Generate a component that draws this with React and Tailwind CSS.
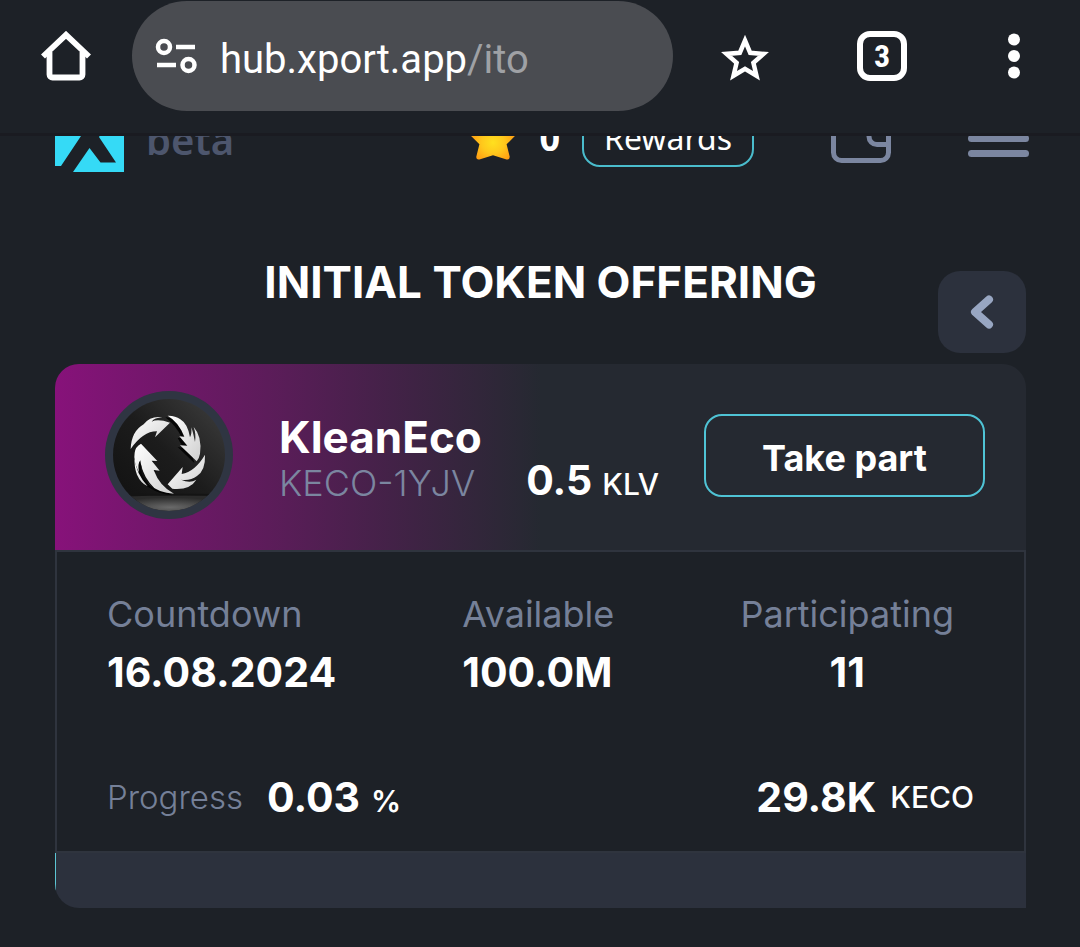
const STATS = [
  { label: 'Countdown', value: '16.08.2024' },
  { label: 'Available', value: '100.0M' },
  { label: 'Participating', value: '11', center: true },
]

const PROGRESS = 0.03

function BrowserBar() {
  return (
    <div className="flex h-[136px] items-start border-b-[3px] border-[#1a1b21] pl-[41px] pr-[59px]">
      <button aria-label="Home" className="mt-[31px] shrink-0">
        <svg className="h-[50px] w-[50px]" viewBox="0 0 50 50" fill="none" stroke="#fff">
          <path d="M8.500 21V43.500a3 3 0 0 0 3 3H38.500a3 3 0 0 0 3-3V21" strokeWidth="5.800" />
          <path d="M2 25.500 25 3.800l23 21.700" strokeWidth="5.800" strokeLinejoin="miter" />
        </svg>
      </button>

      <button className="ml-[41px] mt-px flex h-[110px] min-w-0 flex-1 items-center rounded-full bg-[#4a4c51] pl-[22px] text-left font-[Roboto,sans-serif] text-[40px] leading-[48px] text-white">
        <svg className="h-[44px] w-[44px] shrink-0" viewBox="0 0 44 44" fill="none" stroke="#fff" strokeWidth="4.500">
          <circle cx="10" cy="13" r="6" />
          <path d="M22 13h19M3 31h19" />
          <circle cx="34.500" cy="31" r="6" />
        </svg>
        <span className="ml-[22px] pt-[8px]">
          hub.xport.app<span className="text-[#9fa1a5]">/ito</span>
        </span>
      </button>

      <button aria-label="Bookmark" className="ml-[48px] mt-[34px] shrink-0">
        <svg className="h-[48px] w-[48px]" viewBox="0 0 48 48" fill="none" stroke="#fff" strokeWidth="4.500">
          <path d="M24 6.500 29.200 18.800 42.500 19.900 32.400 28.700 35.500 41.700 24 34.800 12.500 41.700 15.600 28.700 5.500 19.900 18.800 18.800Z" />
        </svg>
      </button>

      <button
        aria-label="Tabs"
        className="ml-[88px] mt-[31px] flex h-[50px] w-[50px] shrink-0 items-center justify-center rounded-[13px] border-[6px] border-white font-['Roboto_Condensed',Roboto,sans-serif] text-[32px] font-bold leading-[38px] text-white"
      >
        3
      </button>

      <button aria-label="Menu" className="ml-[100px] mt-[33px] shrink-0">
        <svg className="h-[46px] w-[14px]" viewBox="0 0 14 46" fill="#fff">
          <circle cx="7" cy="6.500" r="6" />
          <circle cx="7" cy="23" r="6" />
          <circle cx="7" cy="39.500" r="6" />
        </svg>
      </button>
    </div>
  )
}

// Scrolled halfway under the browser bar, so everything hangs from its bottom edge
function AppHeader() {
  return (
    <header className="flex h-[36px] items-end overflow-hidden pl-[55px] pr-[51px]">
      <svg className="h-[69px] w-[69px] shrink-0" viewBox="0 0 69 69" fill="#35daf6">
        <path d="M0 0H69V69H18L34.500 45 45.500 59.500H61L44 34 65 3H50L34.500 24 20 3H5L26 33 6 63H0Z" />
      </svg>
      <span className="ml-[22px] pb-[10px] font-['Noto_Sans',sans-serif] text-[40px] font-semibold leading-[44px] text-[#4d566d]">
        beta
      </span>

      <svg className="mb-[12px] ml-auto h-[46px] w-[46px] shrink-0" viewBox="0 0 44 44">
        <defs>
          <radialGradient id="gold" cx="0.5" cy="0.6" r="0.5">
            <stop offset="0" stopColor="#ffe01f" />
            <stop offset="0.5" stopColor="#ffc81c" />
            <stop offset="1" stopColor="#ff9d12" />
          </radialGradient>
        </defs>
        <path
          d="M20 5q2-4 4 0l5 12 13 1q3 .5 1 3L35 29 38 41q0 3-3 2.500L22 39.500 9 43.500q-3 .5-3-2.500L9 29 1 21q-2-2.500 1-3l13-1Z"
          fill="url(#gold)"
        />
      </svg>
      <span className="ml-[23px] pb-[14px] font-['Noto_Sans',sans-serif] text-[36px] font-bold leading-[40px] text-white">0</span>
      <button className="mb-[5px] ml-[22px] h-[58px] w-[172px] shrink-0 rounded-[18px] border-2 border-[#4abccc] font-['Noto_Sans',sans-serif] text-[32px] leading-[50px] text-white">
        Rewards
      </button>

      <button aria-label="Wallet" className="mb-[9px] ml-[77px] shrink-0">
        <svg className="h-[56px] w-[60px]" viewBox="0 0 60 56" fill="none" stroke="#7b86a0" strokeWidth="5">
          <rect x="2.500" y="2.500" width="55" height="51" rx="8" />
          <path d="M57 17H46a8 8 0 0 0-8 8v4.500a8 8 0 0 0 8 8H57" />
        </svg>
      </button>
      <button aria-label="Open navigation" className="mb-[15px] ml-[77px] flex shrink-0 flex-col gap-[8px]">
        <span className="h-[7px] w-[61px] rounded-full bg-[#7b86a0]" />
        <span className="h-[7px] w-[61px] rounded-full bg-[#7b86a0]" />
        <span className="h-[7px] w-[61px] rounded-full bg-[#7b86a0]" />
      </button>
    </header>
  )
}

function TokenLogo() {
  return (
    <svg className="h-[128px] w-[128px] shrink-0" viewBox="30 34 384 384" role="img" aria-label="KleanEco logo">
      <defs>
        <linearGradient id="disc" x1="0" y1="1" x2="1" y2="0">
          <stop offset="0" stopColor="#101010" />
          <stop offset="0.5" stopColor="#1c1c1c" />
          <stop offset="1" stopColor="#414141" />
        </linearGradient>
        <radialGradient id="floor" cx="0.5" cy="0.6" r="0.5">
          <stop offset="0" stopColor="#6a6a6a" />
          <stop offset="1" stopColor="#2b2b2b" />
        </radialGradient>
        <linearGradient id="silver" x1="0" y1="0" x2="1" y2="1">
          <stop offset="0" stopColor="#ffffff" />
          <stop offset="1" stopColor="#cfcfcf" />
        </linearGradient>
        <clipPath id="discClip">
          <circle cx="222" cy="226" r="168" />
        </clipPath>
      </defs>
      <circle cx="222" cy="226" r="192" fill="#2f3542" />
      <g clipPath="url(#discClip)">
        <rect x="50" y="50" width="350" height="350" fill="url(#disc)" />
        <rect x="50" y="347" width="350" height="60" fill="url(#floor)" />
        <path d="M50 342H400V349Q220 345 50 352Z" fill="#141414" />
        <g fill="#050505" transform="translate(-7 5)">
          <path d="M218 108Q262 112 280 158L305 245 255 197 272 200 255 170 268 170Q248 130 218 108Z" />
          <path d="M138 192 185 243 172 243 192 272 178 270Q195 320 238 342Q160 332 132 278Q112 240 138 192Z" />
        </g>
        <g fill="url(#silver)">
          <path d="M107 208Q109 155 146 134Q166 108 202 113Q178 114 170 126Q188 116 225 129L180 173 186 155Q145 154 107 208Z" />
          <path d="M218 108Q240 107 256 119Q278 132 285 173Q291 163 289 143Q294 157 300 187Q304 164 296 142Q322 171 315 222Q313 235 305 245L255 197 277 198 253 170 268 171Q251 127 218 108Z" />
          <path d="M330 225Q332 271 306 289Q286 304 258 300Q285 312 304 300Q285 332 232 327L218 314 263 262 260 283Q300 276 330 225Z" />
          <path d="M138 192 187 244 170 243 194 273 176 271Q194 320 237 342Q190 340 162 313Q140 285 136 242Q127 252 132 278Q114 244 119 219Q121 201 138 192Z" />
          <path d="M119 238Q124 283 158 320Q137 310 126 285Q117 263 119 238Z" />
        </g>
        <path d="M137 250Q145 294 181 329Q151 309 140 283Z" fill="#111" />
      </g>
    </svg>
  )
}

function OfferingCard() {
  return (
    <article>
      <div className="flex h-[186px] items-center rounded-t-[24px] bg-linear-to-r/srgb from-[#87127a] to-[#252931] to-50% pb-[4px] pl-[50px] pr-[41px]">
        <TokenLogo />
        <div className="ml-[46px] pt-[4px]">
          <h2 className="text-[44px] font-bold leading-[52px] text-white">KleanEco</h2>
          <p className="text-[36px] font-light leading-[40px] text-[#7b86a0]">KECO-1YJV</p>
        </div>
        <p className="ml-auto flex items-baseline gap-[10px] pt-[50px] text-white">
          <span className="text-[41px] font-bold leading-[48px]">0.5</span>
          <span className="text-[30px] font-medium leading-[40px]">KLV</span>
        </p>
        <button className="ml-[45px] h-[83px] w-[281px] shrink-0 rounded-[18px] border-2 border-[#4fc3d5] pt-[6px] text-[36px] font-bold leading-[44px] text-white">
          Take part
        </button>
      </div>

      <div className="border-2 border-[#2f343e] pb-[30px] pl-[50px] pr-[50px] pt-[38px]">
        <dl className="flex justify-between pr-[20px]">
          {STATS.map((stat) => (
            <div key={stat.label} className={stat.center ? 'text-center' : ''}>
              <dt className="text-[36px] leading-[48px] text-[#758098]">{stat.label}</dt>
              <dd className="mt-[10px] text-[41px] font-bold leading-[48px] text-white">{stat.value}</dd>
            </div>
          ))}
        </dl>

        <div className="mt-[77px] flex h-[48px] items-center leading-[48px] text-white">
          <span className="text-[33px] font-light text-[#758098]">Progress</span>
          <p className="ml-[24px] flex items-baseline gap-[11px]">
            <span className="text-[41px] font-bold">{PROGRESS}</span>
            <span className="text-[30px] font-semibold leading-[30px]">%</span>
          </p>
          <span className="ml-auto text-[41px] font-bold">29.8K</span>
          <span className="ml-[14px] text-[30px] font-medium">KECO</span>
        </div>
      </div>

      <div className="h-[55px] overflow-hidden rounded-bl-[24px] bg-[#2c313d]">
        <div className="h-full min-w-px bg-[#5cc5d3]" style={{ width: `${PROGRESS}%` }} />
      </div>
    </article>
  )
}

export default function App() {
  return (
    <div className="min-h-screen bg-[#1d2127] font-[Inter,sans-serif]">
      <BrowserBar />
      <AppHeader />
      <main className="pb-[39px] pl-[55px] pr-[54px] pt-[84px]">
        <div className="grid grid-cols-[1fr_auto_1fr]">
          <h1 className="col-start-2 text-[44px] font-bold leading-[52px] text-white">INITIAL TOKEN OFFERING</h1>
          <button
            aria-label="Back"
            className="mt-[15px] flex h-[82px] w-[88px] items-center justify-center justify-self-end rounded-[22px] bg-[#2c313d]"
          >
            <svg className="h-[34px] w-[24px]" viewBox="0 0 24 34" fill="none" stroke="#98a6c2" strokeWidth="8" strokeLinecap="round" strokeLinejoin="round">
              <path d="M19 4.500 5 17 19 29.500" />
            </svg>
          </button>
        </div>
        <div className="mt-[11px]">
          <OfferingCard />
        </div>
      </main>
    </div>
  )
}
